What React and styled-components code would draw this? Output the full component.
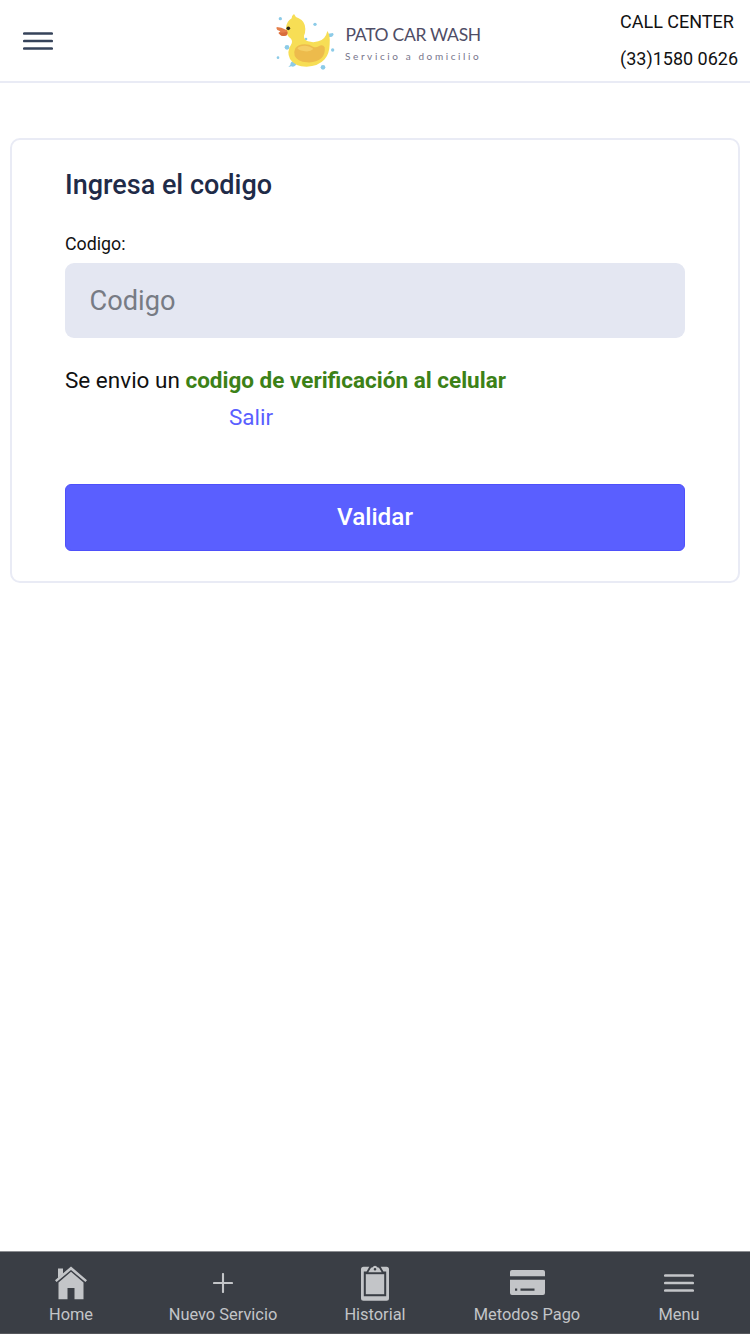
import { useState } from 'react';
import styled, { createGlobalStyle } from 'styled-components';

const colors = {
    primary: '#5a5fff',
    dark: '#1f2b48',
    border: '#e9ebf5',
    navBg: '#3a3e45',
    navIcon: '#c3c5c8',
};

const DuckLogo = () => (
    <DuckSvg viewBox="0 0 240 225">
        <g fill="#8ccbe8">
            <circle cx="46" cy="41" r="5" />
            <circle cx="150" cy="58" r="5" />
            <circle cx="123" cy="102" r="4" />
            <circle cx="66" cy="127" r="7" />
            <circle cx="39" cy="158" r="4" />
            <circle cx="203" cy="135" r="5" />
            <circle cx="174" cy="187" r="7" />
            <path d="M190 86 l14 -2 l2 5 l-5 6 l-10 2 z" />
            <path d="M70 186 q8 -5 7 -12 q2 -7 12 -5 q8 7 3 12 q-6 6 -13 3 z" />
        </g>
        <path
            d="M87 27 q3 9 14 13 q20 9 20 32 q0 12 -4 20 q-1 12 12 17 q16 5 31 0 q22 -6 27 -31 q9 11 7 40 q-1 30 -15 45 q-20 22 -54 22 q-36 0 -50 -23 q-11 -22 3 -43 q6 -9 0 -18 q-15 -10 -15 -30 q0 -21 17 -31 q-1 -8 7 -13 z"
            fill="#f7de55"
        />
        <path
            d="M91 130 q8 -12 28 -12 q15 0 25 7 q8 4 17 -1 q12 -7 18 3 q3 20 -10 33 q-16 14 -43 12 q-30 -3 -37 -20 q-3 -12 2 -22 z"
            fill="#edbb4c"
        />
        <path d="M97 130 q7 -9 24 -8 q18 2 24 10 q-9 9 -25 7 q-18 -2 -23 -9 z" fill="#f6d36c" opacity=".8" />
        <path d="M35 66 L49 68 L66 76 Q70 84 65 91 Q54 96 46 90 L40 84 L46 79 L37 75 Q33 71 35 66 z" fill="#e57f4b" />
        <path d="M42 83 Q54 84 67 80 Q68 86 65 91 Q54 96 46 90 z" fill="#d86c3c" />
        <circle cx="70" cy="70" r="5.5" fill="#2b251b" />
    </DuckSvg>
);

const HomeIcon = () => (
    <svg width="34" height="34" viewBox="0 0 34 34" fill="currentColor">
        <path d="M4 2.5h5v5.2L4 12.3z" />
        <path d="M17 0.5 1 14.2l1.6 1.9L17 4l14.4 12.1 1.6-1.9z" />
        <path d="M17 5.8 4.5 16.4v16.8h9V22h7v11.2h9V16.4z" />
    </svg>
);

const PlusIcon = () => (
    <svg width="20" height="20" viewBox="0 0 20 20" stroke="currentColor" strokeWidth="2.1" strokeLinecap="round">
        <path d="M10 1v18M1 10h18" />
    </svg>
);

const ClipboardIcon = () => (
    <svg width="28" height="36" viewBox="0 0 28 36" fill="currentColor">
        <path
            fillRule="evenodd"
            d="M2.5 1.8h5.8L5.6 6.6H2.8v24.6h22.4V6.6h-2.8l-2.7-4.8h5.8A2.5 2.5 0 0 1 28 4.3v29a2.5 2.5 0 0 1-2.5 2.5h-23A2.5 2.5 0 0 1 0 33.3v-29a2.5 2.5 0 0 1 2.5-2.5z"
        />
        <path d="M4.8 9.2h18.4v20H4.8z" />
        <path
            fillRule="evenodd"
            d="M7.3 7.2 10 2.7l1.7-.4a2.5 2.5 0 0 1 4.6 0l1.7.4 2.7 4.5zM14 3a1.3 1.3 0 1 0 0 2.6A1.3 1.3 0 0 0 14 3z"
        />
    </svg>
);

const CardIcon = () => (
    <svg width="35" height="25" viewBox="0 0 35 25" fill="currentColor">
        <path d="M2 0h31a2 2 0 0 1 2 2v4.2H0V2a2 2 0 0 1 2-2z" />
        <path
            fillRule="evenodd"
            d="M0 9.8h35V23a2 2 0 0 1-2 2H2a2 2 0 0 1-2-2zM5 18.6v2.2h2.2v-2.2zM10.5 18.6v2.2h14v-2.2z"
        />
    </svg>
);

const MenuIcon = () => (
    <svg width="30" height="20" viewBox="0 0 30 20" stroke="currentColor" strokeWidth="2.7" strokeLinecap="round">
        <path d="M1.3 2.5h27.4M1.3 10h27.4M1.3 17.5h27.4" />
    </svg>
);

const navItems = [
    { label: 'Home', Icon: HomeIcon },
    { label: 'Nuevo Servicio', Icon: PlusIcon },
    { label: 'Historial', Icon: ClipboardIcon },
    { label: 'Metodos Pago', Icon: CardIcon },
    { label: 'Menu', Icon: MenuIcon },
];

const App = () => {
    const [code, setCode] = useState('');

    return (
        <Page>
            <GlobalStyle />
            <Header>
                <MenuButton aria-label="menu"><MenuIcon /></MenuButton>
                <Logo>
                    <DuckLogo />
                    <LogoText>
                        <LogoName>PATO CAR WASH</LogoName>
                        <LogoSlogan>Servicio a domicilio</LogoSlogan>
                    </LogoText>
                </Logo>
                <CallCenter>
                    <span>CALL CENTER</span>
                    <span>(33)1580 0626</span>
                </CallCenter>
            </Header>
            <Card onSubmit={(e) => e.preventDefault()}>
                <Title>Ingresa el codigo</Title>
                <Label htmlFor="code">Codigo:</Label>
                <Input id="code" placeholder="Codigo" value={code} onChange={(e) => setCode(e.target.value)} />
                <Message>
                    Se envio un <b>codigo de verificación al celular</b>
                </Message>
                <ExitLink href="#">Salir</ExitLink>
                <SubmitButton>Validar</SubmitButton>
            </Card>
            <BottomNav>
                {navItems.map(({ label, Icon }) => (
                    <NavItem key={label}>
                        <NavIcon><Icon /></NavIcon>
                        <NavLabel>{label}</NavLabel>
                    </NavItem>
                ))}
            </BottomNav>
        </Page>
    );
};

export default App;

const GlobalStyle = createGlobalStyle`
* {
    box-sizing: border-box;
}

body {
    margin: 0;
    background-color: #ffffff;
    font-family: Roboto, "Liberation Sans", sans-serif;
}
`;

const Page = styled.div`
    display: flex;
    flex-direction: column;
    height: 1334px;
    overflow: hidden;
`;

const Header = styled.header`
    display: grid;
    grid-template-columns: 265px 1fr 130px;
    height: 83px;
    border-bottom: 2px solid ${colors.border};
`;

const MenuButton = styled.button`
    display: flex;
    align-items: center;
    padding: 0 0 0 22.5px;
    border: 0;
    background: none;
    color: #36435a;
`;

const Logo = styled.div`
    display: flex;
    padding-top: 5px;
`;

const DuckSvg = styled.svg`
    width: 80px;
    height: 75px;
`;

const LogoText = styled.div`
    display: flex;
    flex-direction: column;
    padding-top: 19px;
    color: #4f4d66;
    font-family: Lato, sans-serif;
    white-space: nowrap;
`;

const LogoName = styled.span`
    margin-left: 0.5px;
    font-size: 17.5px;
    line-height: 22px;
    letter-spacing: -0.3px;
`;

const LogoSlogan = styled.span`
    font-size: 10px;
    line-height: 21px;
    letter-spacing: 2.6px;
    color: #77758b;
`;

const CallCenter = styled.div`
    display: flex;
    flex-direction: column;
    gap: 1px;
    padding-top: 4px;
    font-size: 18px;
    line-height: 36px;
    color: #111111;
    white-space: nowrap;
`;

const Card = styled.form`
    display: flex;
    flex-direction: column;
    align-items: flex-start;
    height: 445px;
    margin: 55px 10px 0;
    padding: 29px 53px 0;
    border: 2px solid ${colors.border};
    border-radius: 10px;
`;

const Title = styled.h2`
    margin: 0;
    font-size: 27px;
    line-height: 32px;
    font-weight: 500;
    color: ${colors.dark};
`;

const Label = styled.label`
    margin-top: 31px;
    font-size: 17.8px;
    line-height: 24px;
    color: #111111;
`;

const Input = styled.input`
    width: 100%;
    height: 75px;
    margin-top: 7px;
    padding: 0 25px 0 24.5px;
    border: 0;
    border-radius: 9px;
    background-color: #e4e7f2;
    font-family: inherit;
    font-size: 27.2px;

    &::placeholder {
        color: #777b84;
        opacity: 1;
    }
`;

const Message = styled.p`
    margin: 24px 0 0;
    font-size: 22.5px;
    line-height: 36px;
    color: #111111;
    white-space: nowrap;

    & b {
        color: #3c8117;
    }
`;

const ExitLink = styled.a`
    margin: 1px 0 0 164px;
    font-size: 22.5px;
    line-height: 36px;
    color: ${colors.primary};
    text-decoration: none;
`;

const SubmitButton = styled.button`
    width: 100%;
    height: 67px;
    margin-top: 49px;
    padding: 0 0 2px;
    border: 1px solid #4e50fa;
    border-radius: 6px;
    background-color: ${colors.primary};
    color: #ffffff;
    font-family: inherit;
    font-size: 24.3px;
    font-weight: 500;
`;

const BottomNav = styled.nav`
    display: flex;
    justify-content: center;
    height: 83px;
    margin-top: auto;
    border-top: 1px solid #8b8d91;
    border-bottom: 1px solid #55575c;
    background-color: ${colors.navBg};
`;

const NavItem = styled.div`
    display: flex;
    flex-direction: column;
    align-items: center;
    flex: 0 0 152px;
    padding-top: 10.5px;
    color: ${colors.navIcon};
`;

const NavIcon = styled.div`
    display: flex;
    align-items: center;
    height: 40px;
`;

const NavLabel = styled.span`
    font-size: 16.4px;
    line-height: 24px;
    white-space: nowrap;
`;
